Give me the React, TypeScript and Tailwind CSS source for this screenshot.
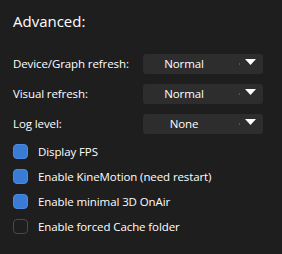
import React from "react";

const Select = ({ value }: { value: string }) => (
  <div className="relative w-[120px] h-[20px] rounded-[3px] bg-[#2d2d2d] flex items-center">
    <div className="w-[82px] text-center text-white text-[11.5px] leading-none font-medium tracking-[-0.1px]">{value}</div>
    <div className="absolute left-[96px] top-[9px] w-[1px] h-[2px] bg-[#555]" />
    <svg className="absolute left-[102px] top-[5px]" width="11" height="6" viewBox="0 0 11 6">
      <polygon points="0,0 11,0 5.5,6" fill="#ffffff" />
    </svg>
  </div>
);

const Row = ({ label, value }: { label: string; value: string }) => (
  <div className="flex items-center h-[30px]">
    <div className="w-[130px] text-white text-[11.5px] leading-none font-medium tracking-[-0.1px]">{label}</div>
    <Select value={value} />
  </div>
);

const Check = ({ label, checked }: { label: string; checked: boolean }) => (
  <div className="flex items-center h-[25px]">
    <div
      className={
        checked
          ? "w-[15px] h-[15px] rounded-[4px] bg-[#3a7bd5] border border-[#4a8ae0]"
          : "w-[15px] h-[15px] rounded-[4px] border border-[#4a4a4a]"
      }
    />
    <div className="ml-[10px] text-white text-[11.5px] leading-none font-medium tracking-[-0.1px]">{label}</div>
  </div>
);

export default function App() {
  return (
    <div
      className="w-[282px] h-[254px] bg-[#1e1e1e] pl-[13px]"
      style={{ fontFamily: '"Open Sans", "Noto Sans", sans-serif' }}
    >
      <div className="pt-[12px] h-[49px] text-white text-[15px] leading-[18px]">Advanced:</div>
      <Row label="Device/Graph refresh:" value="Normal" />
      <Row label="Visual refresh:" value="Normal" />
      <Row label="Log level:" value="None" />
      <Check label="Display FPS" checked />
      <Check label="Enable KineMotion (need restart)" checked />
      <Check label="Enable minimal 3D OnAir" checked />
      <Check label="Enable forced Cache folder" checked={false} />
    </div>
  );
}
